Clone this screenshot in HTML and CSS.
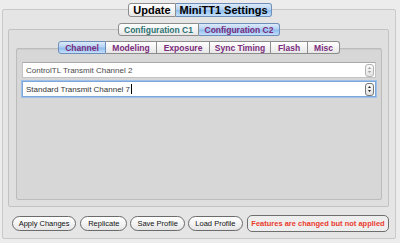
FILE: index.html
```html
<!DOCTYPE html>
<html lang="en">
<head>
    <meta charset="UTF-8">
    <title>MiniTT1 Settings</title>
    <link rel="stylesheet" href="styles.css">
</head>
<body>

    <!-- Top level tabs -->
    <div class="tabs tabs-top">
        <span class="tab tab-update">Update</span>
        <span class="tab tab-mini selected">MiniTT1 Settings</span>
    </div>

    <div class="box level1">
        <!-- Configuration tabs -->
        <div class="tabs tabs-config">
            <span class="tab tab-c1 teal">Configuration C1</span>
            <span class="tab tab-c2 selected">Configuration C2</span>
        </div>

        <div class="box level2">
            <!-- Settings tabs -->
            <div class="tabs tabs-inner">
                <span class="tab tab-channel selected">Channel</span>
                <span class="tab tab-modeling">Modeling</span>
                <span class="tab tab-exposure">Exposure</span>
                <span class="tab tab-sync">Sync Timing</span>
                <span class="tab tab-flash">Flash</span>
                <span class="tab tab-misc">Misc</span>
            </div>

            <div class="box level3">
                <div class="field">
                    <span class="field-text">ControlTL Transmit Channel 2</span>
                    <span class="stepper">
                        <svg width="7" height="12" viewBox="0 0 7 12">
                            <path d="M3.5 3 L5 5 L2 5 Z" fill="#9a9a9a"/>
                            <path d="M3.5 9 L5 7 L2 7 Z" fill="#9a9a9a"/>
                        </svg>
                    </span>
                </div>
                <div class="field focused">
                    <span class="field-text">Standard Transmit Channel 7<span class="caret"></span></span>
                    <span class="stepper">
                        <svg width="7" height="12" viewBox="0 0 7 12">
                            <path d="M3.5 3 L5 5 L2 5 Z" fill="#222"/>
                            <path d="M3.5 9 L5 7 L2 7 Z" fill="#222"/>
                        </svg>
                    </span>
                </div>
            </div>
        </div>

        <!-- Actions -->
        <div class="actions">
            <button class="pill btn-apply">Apply Changes</button>
            <button class="pill btn-replicate">Replicate</button>
            <button class="pill btn-save">Save Profile</button>
            <button class="pill btn-load">Load Profile</button>
            <div class="status">Features are changed but not applied</div>
        </div>
    </div>

</body>
</html>
```

FILE: styles.css
```css
body {
    margin: 0;
    padding: 3px 0 0 0;
    background-color: #ececec;
    font-family: "Liberation Sans", Arial, sans-serif;
    width: 400px;
    height: 243px;
    overflow: hidden;
}

/* Segmented tab bars */
.tabs {
    display: flex;
    justify-content: center;
    position: relative;
    z-index: 1;
}

.tab {
    display: flex;
    align-items: center;
    justify-content: center;
    box-sizing: border-box;
    background: linear-gradient(#ffffff, #f1f1f1 60%, #e6e6e6);
    border: 1px solid #8c8c8c;
    border-left: none;
    font-weight: bold;
    color: #7a2b7c;
    white-space: nowrap;
}

.tab:first-child {
    border-left: 1px solid #8c8c8c;
    border-radius: 3px 0 0 3px;
}

.tab:last-child {
    border-radius: 0 3px 3px 0;
}

.tab.selected {
    background: linear-gradient(#dcebfa, #b5d3f3 45%, #8fbdee 55%, #c4e0fb);
    border-color: #6f8fb8;
}

.tab.teal {
    color: #2c7474;
}

.tabs-top .tab {
    height: 14px;
    font-size: 11px;
    color: #000;
}

.tab-update { width: 48px; }
.tab-mini { width: 96px; }

.tabs-config {
    margin-left: 110px;
    justify-content: flex-start;
}

.tabs-config .tab {
    height: 13px;
    font-size: 8.5px;
}

.tab-c1 { width: 81px; }
.tab-c2 { width: 81px; }

.tabs-inner {
    justify-content: flex-start;
    margin-left: 42px;
}

.tabs-inner .tab {
    height: 13px;
    font-size: 8.5px;
}

.tab-channel { width: 48px; }
.tab-modeling { width: 51px; }
.tab-exposure { width: 53px; }
.tab-sync { width: 61px; }
.tab-flash { width: 37px; }
.tab-misc { width: 32px; }

/* Nested group boxes */
.box {
    box-sizing: border-box;
    border: 1px solid #c6c6c6;
    border-radius: 2px;
}

.level1 {
    width: 394px;
    height: 230px;
    margin: -8px 0 0 2px;
    padding: 13px 6px 0 5px;
    background-color: #e5e5e5;
    border-color: #c9c9c9;
}

.level2 {
    margin-top: -7px;
    height: 178px;
    padding: 11px 6px 0 7px;
    background-color: #dfdfdf;
    border-color: #c2c2c2;
}

.level3 {
    margin-top: -6px;
    height: 152px;
    padding: 13px 5px 0 5px;
    background-color: #d7d7d7;
    border-color: #bcbcbc;
    box-shadow: inset 0 1px 1px rgba(0, 0, 0, 0.06);
}

/* Text fields */
.field {
    display: flex;
    align-items: center;
    justify-content: space-between;
    box-sizing: border-box;
    height: 16px;
    margin-bottom: 3px;
    padding: 0 1px 0 3px;
    background-color: #fff;
    border: 1px solid #c4c4c4;
    border-top-color: #a9a9a9;
    font-size: 8px;
    color: #4a4a4a;
}

.field.focused {
    border-color: #7ea6d6;
    box-shadow: 0 0 0 1px #9dc1ea;
    color: #333;
}

.caret {
    display: inline-block;
    width: 1px;
    height: 10px;
    margin-left: 1px;
    background-color: #000;
    vertical-align: -2px;
}

.stepper {
    display: flex;
    box-sizing: border-box;
    width: 9px;
    height: 13px;
    border: 1px solid #b4b4b4;
    border-radius: 3px;
    background: linear-gradient(#fafafa, #e2e2e2);
    align-items: center;
    justify-content: center;
}

.focused .stepper {
    border-color: #777;
}

/* Bottom row */
.actions {
    display: flex;
    align-items: center;
    margin-top: 8px;
    padding-left: 4px;
    gap: 3px;
}

.pill {
    height: 15px;
    padding: 0;
    border: 1px solid #6b6b6b;
    border-radius: 8px;
    background: linear-gradient(#ffffff, #f4f4f4 50%, #e4e4e4);
    font-family: "Liberation Sans", Arial, sans-serif;
    font-size: 7.5px;
    color: #111;
}

.btn-apply { width: 65px; }
.btn-replicate { width: 48px; margin-left: 1px; }
.btn-save { width: 55px; }
.btn-load { width: 56px; }

.status {
    display: flex;
    align-items: center;
    justify-content: center;
    box-sizing: border-box;
    width: 144px;
    height: 17px;
    margin-left: 1px;
    border: 1px solid #6e6e6e;
    border-radius: 5px;
    background-color: #eeeeee;
    color: #ea3a2e;
    font-size: 7.5px;
    font-weight: bold;
    white-space: nowrap;
}
```
